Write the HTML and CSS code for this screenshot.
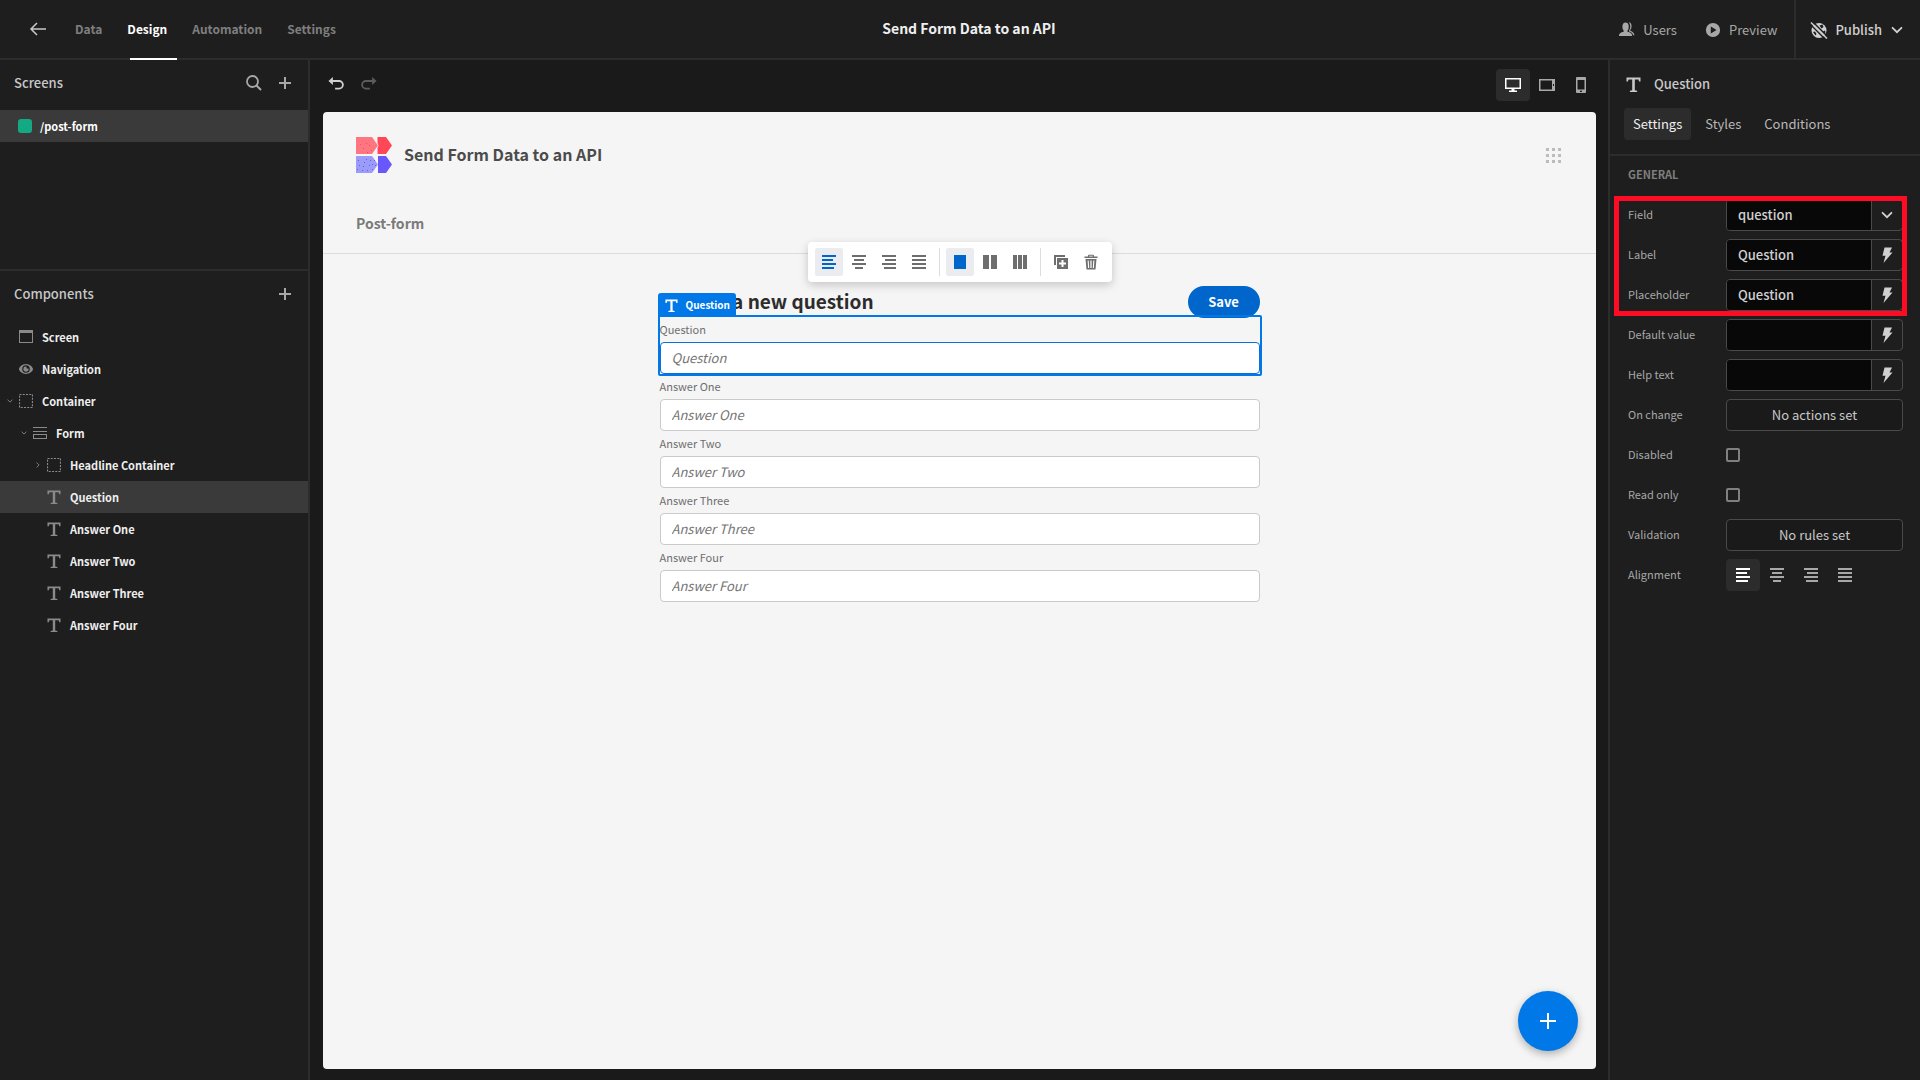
FILE: index.html
```html
<!DOCTYPE html>
<html lang="en">
<head>
<meta charset="utf-8">
<title>Send Form Data to an API</title>
<meta name="viewport" content="width=device-width, initial-scale=1">
<link rel="stylesheet" href="styles.css">
</head>
<body>
<svg class="sprite" aria-hidden="true">
  <symbol id="i-text" viewBox="1.5 1 15 15"><path d="M2 1.500h14v4h-1.400L14 3.500h-3.700v10.800l2.300.5v1.200H5.400v-1.200l2.300-.5V3.500H4L3.400 5.500H2z"/></symbol>
  <symbol id="i-plus" viewBox="0 0 18 18"><path d="M8 3h2v5h5v2h-5v5H8v-5H3V8h5z"/></symbol>
  <symbol id="i-left" viewBox="1 1 16 16"><path d="M2 2h14v2H2zM2 6h11v2H2zM2 10h14v2H2zM2 14h12v2H2z"/></symbol>
  <symbol id="i-center" viewBox="1 1 16 16"><path d="M2 2h14v2H2zM4 6h10v2H4zM2 10h14v2H2zM5 14h8v2H5z"/></symbol>
  <symbol id="i-right" viewBox="1 1 16 16"><path d="M2 2h14v2H2zM5 6h11v2H5zM2 10h14v2H2zM4 14h12v2H4z"/></symbol>
  <symbol id="i-justify" viewBox="1 1 16 16"><path d="M2 2h14v2H2zM2 6h14v2H2zM2 10h14v2H2zM2 14h14v2H2z"/></symbol>
  <symbol id="i-bolt" viewBox="1 1 16 16"><path d="M6.500 1.500h7.500l-2.500 5h3L5.500 17l2-7.200h-3z"/></symbol>
  <symbol id="i-box" viewBox="2 2 14 14"><path d="M2.500 2.500h13v13h-13z" fill="none" stroke="currentColor" stroke-width="1.200" stroke-dasharray="2 1.250"/></symbol>
  <symbol id="i-down" viewBox="0 0 18 18"><path d="M4 6.500l5 5 5-5" fill="none" stroke="currentColor" stroke-width="2" stroke-linecap="round"/></symbol>
</svg>

<header class="topbar">
  <nav class="main-nav">
    <a href="#" class="back" aria-label="Back"><svg class="icon" viewBox="0 0 18 18"><path d="M17 9H2M8 3L2 9l6 6" fill="none" stroke="currentColor" stroke-width="1.500"/></svg></a>
    <a href="#">Data</a>
    <a href="#" class="current">Design</a>
    <a href="#">Automation</a>
    <a href="#">Settings</a>
  </nav>
  <h1 class="app-name">Send Form Data to an API</h1>
  <div class="top-actions">
    <button type="button" class="top-btn"><svg class="icon" viewBox="1 1 17 17"><path d="M1 16c0-3 2.500-4 4.700-4.600.5-.2.500-1 .2-1.400C4.700 8.600 4.500 7 4.700 5 5 2.700 6.300 1.500 8 1.500s3.100 1.200 3.300 3.500c.2 2 0 3.600-1.200 5-.3.400-.3 1.200.2 1.400 2.200.6 4.700 1.600 4.700 4.600z"/><path d="M11 1.200c2 0 3.200 1.300 3.300 3.500.1 2-.2 3.400-1.200 4.600-.3.500-.2 1 .3 1.300 2 .8 3.700 1.800 4 4.400h-1.300c-.6-2.200-2.400-3.300-4.200-3.900-.4-.3-.3-1 0-1.500 1-1.600 1.200-3 1-5C12.700 3 12.100 2 11 1.200z"/></svg>Users</button>
    <button type="button" class="top-btn"><svg class="icon" viewBox="0 0 18 18"><path fill-rule="evenodd" d="M9 1a8 8 0 100 16A8 8 0 009 1zM6.500 5l6.500 4-6.500 4z"/></svg>Preview</button>
    <button type="button" class="top-btn publish"><svg class="icon" viewBox="0 0 18 18"><circle cx="9" cy="9.500" r="7.500"/><path d="M9.500 4.500l3-1 1 2.500-2 1.500zM3 11l2-.5 1.500 2.500-1 1.500zM13 10.500l2-1 .5 2-1.500 1.500z" fill="#1e1e1e"/><path d="M3 1L18 16" stroke="#1e1e1e" stroke-width="1.500"/><path d="M.5 3.500l14 14" stroke="#1e1e1e" stroke-width="1.500"/><path d="M1 1.500l16 16" stroke="currentColor" stroke-width="1.500"/></svg>Publish<svg class="icon chev"><use href="#i-down"/></svg></button>
  </div>
</header>

<div class="builder">
  <aside class="sidebar">
    <section class="screens">
      <div class="side-head"><h2>Screens</h2>
        <button type="button" class="icon-btn" aria-label="Search"><svg class="icon" viewBox="0 0 18 18"><circle cx="7.500" cy="7.500" r="5.500" fill="none" stroke="currentColor" stroke-width="1.800"/><path d="M11.500 11.500l4.500 4.500" stroke="currentColor" stroke-width="2"/></svg></button>
        <button type="button" class="icon-btn" aria-label="Add screen"><svg class="icon"><use href="#i-plus"/></svg></button>
      </div>
      <a href="#" class="screen-row"><span class="swatch"></span>/post-form</a>
    </section>
    <section class="components">
      <div class="side-head"><h2>Components</h2>
        <button type="button" class="icon-btn" aria-label="Add component"><svg class="icon"><use href="#i-plus"/></svg></button>
      </div>
      <ul class="tree">
        <li><a href="#" class="node"><span class="twist"></span><svg class="icon" viewBox="0 0 14 14"><path fill-rule="evenodd" d="M0 0h14v13H0zM1 3v9h12V3z"/></svg>Screen</a></li>
        <li><a href="#" class="node"><span class="twist"></span><svg class="icon" viewBox="0 0 14 14"><path fill-rule="evenodd" d="M7 2C3.500 2 0 5 0 7s3.500 5 7 5 7-3 7-5-3.500-5-7-5zM7 3.200a3.800 3.800 0 110 7.600 3.800 3.800 0 010-7.600z"/><path d="M7.500 4.500v2h2a2.600 2.600 0 11-2-2z"/></svg>Navigation</a></li>
        <li><a href="#" class="node"><svg class="twist"><use href="#i-down"/></svg><svg class="icon"><use href="#i-box"/></svg>Container</a>
          <ul>
            <li><a href="#" class="node"><svg class="twist"><use href="#i-down"/></svg><svg class="icon" viewBox="0 0 14 14"><path fill-rule="evenodd" d="M0 1h14v1H0zM0 5h14v1H0zM0 8h14v5H0zM1 9v3h12V9z"/></svg>Form</a>
              <ul>
                <li><a href="#" class="node"><svg class="twist closed"><use href="#i-down"/></svg><svg class="icon"><use href="#i-box"/></svg>Headline Container</a></li>
                <li><a href="#" class="node selected"><span class="twist"></span><svg class="icon"><use href="#i-text"/></svg>Question</a></li>
                <li><a href="#" class="node"><span class="twist"></span><svg class="icon"><use href="#i-text"/></svg>Answer One</a></li>
                <li><a href="#" class="node"><span class="twist"></span><svg class="icon"><use href="#i-text"/></svg>Answer Two</a></li>
                <li><a href="#" class="node"><span class="twist"></span><svg class="icon"><use href="#i-text"/></svg>Answer Three</a></li>
                <li><a href="#" class="node"><span class="twist"></span><svg class="icon"><use href="#i-text"/></svg>Answer Four</a></li>
              </ul>
            </li>
          </ul>
        </li>
      </ul>
    </section>
  </aside>

  <main class="workspace">
    <div class="workbar">
      <button type="button" class="hist" aria-label="Undo"><svg class="icon" viewBox="0 1 18 18"><path d="M4 5.500h8.500a4.200 4.200 0 010 8.500H8" fill="none" stroke="currentColor" stroke-width="2"/><path d="M.5 5.500L5.500 1v9z"/></svg></button>
      <button type="button" class="hist" aria-label="Redo" disabled><svg class="icon" viewBox="0 1 18 18"><path d="M14 5.500H5.500a4.200 4.200 0 000 8.500H10" fill="none" stroke="currentColor" stroke-width="2"/><path d="M17.500 5.500L12.500 1v9z"/></svg></button>
      <div class="devices">
        <button type="button" class="seg active" aria-label="Desktop"><svg class="icon" viewBox="1 1 16 16"><path fill-rule="evenodd" d="M1 2h16v11h-6.500v1.500H13V16H5v-1.500h2.500V13H1zM2.500 3.500v8h13v-8z"/></svg></button>
        <button type="button" class="seg" aria-label="Tablet"><svg class="icon" viewBox="1 1 16 16"><path fill-rule="evenodd" d="M1 3h16v12H1zM2.500 4.500v9H14v-9zM15 8v2h1V8z"/></svg></button>
        <button type="button" class="seg" aria-label="Mobile"><svg class="icon" viewBox="1 1 16 16"><path fill-rule="evenodd" d="M5 1h8a1 1 0 011 1v14a1 1 0 01-1 1H5a1 1 0 01-1-1V2a1 1 0 011-1zM5.500 4v9.500h7V4zM8 14.800v1.200h2v-1.200z"/></svg></button>
      </div>
    </div>

    <div class="preview">
      <div class="app-head">
        <div class="brand">
          <svg class="logo" viewBox="0 0 36 36"><path fill="#ff7680" d="M0 0h16l6 8.500-6 8.500H0z"/><path fill="#ff4757" d="M21.500 0H30l6 8.500-6 8.500h-8.500V11l1-2.500-1-2.500z"/><path fill="#9b9bf9" d="M0 19h16l6 8.500-6 8.500H0z"/><path fill="#6a57fb" d="M22 19h8l6 8.500-6 8.500h-8z"/><g fill="#ff4757"><path d="M4 7h1v1H4zM10 6h1v1h-1zM13 8h1v1h-1zM7 11h1v1H7zM15 13h1v1h-1zM11 15h1v1h-1z"/></g><g fill="#6a57fb"><path d="M2 23h1v1H2zM10 22h1v1h-1zM14 23h1v1h-1zM18 23h1v1h-1zM8 25h1v1H8zM3 28h1v1H3zM7 29h1v1H7zM13 28h1v1h-1zM16 27h1v1h-1zM19 28h1v1h-1zM1 32h1v1H1zM6 33h1v1H6zM11 33h1v1h-1zM16 32h1v1h-1z"/></g></svg>
          <h2>Send Form Data to an API</h2>
          <button type="button" class="grip" aria-label="Apps"><svg viewBox="0 0 15 15"><path d="M0 0h3v3H0zM6 0h3v3H6zM12 0h3v3h-3zM0 6h3v3H0zM6 6h3v3H6zM12 6h3v3h-3zM0 12h3v3H0zM6 12h3v3H6zM12 12h3v3h-3z"/></svg></button>
        </div>
        <a href="#" class="app-link">Post-form</a>
      </div>
      <div class="toolbar" role="toolbar" aria-label="Layout">
        <button type="button" class="tool active" aria-label="Align left"><svg class="icon"><use href="#i-left"/></svg></button>
        <button type="button" class="tool" aria-label="Align center"><svg class="icon"><use href="#i-center"/></svg></button>
        <button type="button" class="tool" aria-label="Align right"><svg class="icon"><use href="#i-right"/></svg></button>
        <button type="button" class="tool" aria-label="Justify"><svg class="icon"><use href="#i-justify"/></svg></button>
        <span class="rule"></span>
        <button type="button" class="tool active" aria-label="One column"><svg class="icon" viewBox="0 0 16 16"><path d="M2 1h12v14H2z"/></svg></button>
        <button type="button" class="tool" aria-label="Two columns"><svg class="icon" viewBox="0 0 16 16"><path d="M1 1h6v14H1zM9 1h6v14H9z"/></svg></button>
        <button type="button" class="tool" aria-label="Three columns"><svg class="icon" viewBox="0 0 16 16"><path d="M1 1h4v14H1zM6 1h4v14H6zM11 1h4v14h-4z"/></svg></button>
        <span class="rule"></span>
        <button type="button" class="tool" aria-label="Duplicate"><svg class="icon" viewBox="1 1 16 16"><path d="M2 2h11v2H4v8H2z"/><path fill-rule="evenodd" d="M5 5h11v11H5zM9.500 7v2.500H7v2h2.500V14h2v-2.500H14v-2h-2.500V7z"/></svg></button>
        <button type="button" class="tool" aria-label="Delete"><svg class="icon" viewBox="1 1 16 16"><path fill-rule="evenodd" d="M6 3.500V2.700a1 1 0 011-1h4a1 1 0 011 1v.8h3.500V5h-13V3.500zM7.200 3.500h3.600v-.8H7.200zM3.500 6h11l-1 10.500h-9zM5.600 7.500l.5 7.500h1.100l-.5-7.500zM8.400 7.500V15h1.200V7.500zM11.300 7.500l-.5 7.500h1.100l.5-7.500z"/></svg></button>
      </div>

      <form class="entry">
        <div class="headline"><h3>Submit a new question</h3><button type="button" class="save">Save</button></div>
        <div class="field chosen">
          <span class="tag"><svg class="icon"><use href="#i-text"/></svg>Question</span>
          <label for="q">Question</label><input id="q" type="text" placeholder="Question">
        </div>
        <div class="field"><label for="a1">Answer One</label><input id="a1" type="text" placeholder="Answer One"></div>
        <div class="field"><label for="a2">Answer Two</label><input id="a2" type="text" placeholder="Answer Two"></div>
        <div class="field"><label for="a3">Answer Three</label><input id="a3" type="text" placeholder="Answer Three"></div>
        <div class="field"><label for="a4">Answer Four</label><input id="a4" type="text" placeholder="Answer Four"></div>
      </form>
      <button type="button" class="fab" aria-label="Add"><svg viewBox="0 0 16 16"><path d="M7 0h2v7h7v2H9v7H7V9H0V7h7z"/></svg></button>
    </div>
  </main>

  <aside class="inspector">
    <div class="insp-head">
      <div class="insp-title"><svg class="icon"><use href="#i-text"/></svg><h2>Question</h2></div>
      <div class="tabs">
        <button type="button" class="tab active">Settings</button>
        <button type="button" class="tab">Styles</button>
        <button type="button" class="tab">Conditions</button>
      </div>
    </div>
    <div class="props">
      <h3>General</h3>
      <div class="group marked">
        <div class="prop"><label for="p-field">Field</label><div class="combo"><select id="p-field"><option>question</option></select><span class="addon"><svg class="icon"><use href="#i-down"/></svg></span></div></div>
        <div class="prop"><label for="p-label">Label</label><div class="combo"><input id="p-label" type="text" value="Question"><button type="button" class="addon" aria-label="Bind label"><svg class="icon"><use href="#i-bolt"/></svg></button></div></div>
        <div class="prop"><label for="p-ph">Placeholder</label><div class="combo"><input id="p-ph" type="text" value="Question"><button type="button" class="addon" aria-label="Bind placeholder"><svg class="icon"><use href="#i-bolt"/></svg></button></div></div>
      </div>
      <div class="group">
        <div class="prop"><label for="p-def">Default value</label><div class="combo"><input id="p-def" type="text"><button type="button" class="addon" aria-label="Bind default value"><svg class="icon"><use href="#i-bolt"/></svg></button></div></div>
        <div class="prop"><label for="p-help">Help text</label><div class="combo"><input id="p-help" type="text"><button type="button" class="addon" aria-label="Bind help text"><svg class="icon"><use href="#i-bolt"/></svg></button></div></div>
        <div class="prop"><label for="p-chg">On change</label><button type="button" id="p-chg" class="wide">No actions set</button></div>
        <div class="prop"><label for="p-dis">Disabled</label><input id="p-dis" type="checkbox"></div>
        <div class="prop"><label for="p-ro">Read only</label><input id="p-ro" type="checkbox"></div>
        <div class="prop"><label for="p-val">Validation</label><button type="button" id="p-val" class="wide">No rules set</button></div>
        <div class="prop"><span id="p-al" class="name">Alignment</span><div class="segs" role="group" aria-labelledby="p-al">
          <button type="button" class="seg active" aria-label="Left"><svg class="icon"><use href="#i-left"/></svg></button>
          <button type="button" class="seg" aria-label="Center"><svg class="icon"><use href="#i-center"/></svg></button>
          <button type="button" class="seg" aria-label="Right"><svg class="icon"><use href="#i-right"/></svg></button>
          <button type="button" class="seg" aria-label="Justify"><svg class="icon"><use href="#i-justify"/></svg></button>
        </div></div>
      </div>
    </div>
  </aside>
</div>
</body>
</html>
```
FILE: styles.css
```css
* { box-sizing: border-box; }
body {
  margin: 0;
  min-height: 100vh;
  display: flex;
  flex-direction: column;
  background: #1e1e1e;
  color: #c8c8c8;
  font: 13px/20px "Noto Sans CJK SC", "Noto Sans", sans-serif;
}
h1, h2, h3, ul { margin: 0; padding: 0; font-size: inherit; font-weight: inherit; }
ul { list-style: none; }
a { color: inherit; text-decoration: none; }
button, input, select { font: inherit; color: inherit; margin: 0; padding: 0; border: 0; background: none; border-radius: 0; }
button { display: inline-flex; align-items: center; justify-content: center; }
svg { display: block; fill: currentColor; flex: none; }
.sprite { position: absolute; width: 0; height: 0; }
.icon { width: 16px; height: 16px; }

/* Top bar */
.topbar {
  display: grid;
  grid-template-columns: 1fr auto 1fr;
  align-items: stretch;
  height: 60px;
  padding-left: 18px;
  border-bottom: 2px solid #2c2c2c;
}
.main-nav { display: flex; gap: 25px; padding-left: 11px; }
.main-nav a { position: relative; display: flex; align-items: center; height: 60px; padding-bottom: 2px; color: #7f7f7f; font-size: 12px; font-weight: 700; }
.main-nav .back { color: #c8c8c8; margin-right: 3px; }
.main-nav .back .icon { width: 18px; height: 18px; }
.main-nav .current { color: #fff; }
.main-nav .current::after { content: ""; position: absolute; left: 3px; bottom: 0; width: 47px; height: 2px; background: #fff; }
.app-name { padding-top: 18px; color: #efefef; font-size: 14px; font-weight: 700; }
.top-actions { display: flex; justify-content: flex-end; }
.top-btn { gap: 8px; color: #a8a8a8; margin-right: 28px; }
.top-btn:nth-child(2) { margin-right: 17px; }
.top-btn.publish { gap: 7px; margin: 0; padding: 0 15px 0 14px; color: #d0d0d0; font-weight: 500; border-left: 2px solid #2c2c2c; }
.publish .icon { width: 18px; height: 18px; }
.publish .chev { width: 16px; height: 16px; }

.builder { flex: 1; display: grid; grid-template-columns: 310px minmax(0, 1fr) 312px; }

/* Left side */
.sidebar { border-right: 2px solid #2c2c2c; }
.screens { height: 211px; border-bottom: 2px solid #2c2c2c; }
.side-head { display: flex; align-items: center; gap: 15px; height: 50px; padding: 0 15px 4px 14px; }
.side-head h2 { flex: 1; font-weight: 500; font-size: 13px; }
.icon-btn { color: #a8a8a8; width: 16px; height: 16px; }
.icon-btn .icon { width: 18px; height: 18px; }
.screen-row { display: flex; align-items: center; gap: 8px; height: 32px; padding-left: 18px; background: #3a3a3a; color: #fff; font-size: 11px; font-weight: 700; }
.swatch { width: 14px; height: 14px; border-radius: 3px; background: #12a983; }
.node { display: flex; align-items: center; height: 32px; padding-left: 6px; color: #efefef; font-size: 11px; font-weight: 700; }
.node .icon { width: 14px; height: 14px; margin-right: 9px; color: #8a8a8a; }
.twist { width: 8px; height: 8px; margin-right: 5px; color: #8a8a8a; }
.twist.closed { transform: rotate(-90deg); }
.tree ul .node { padding-left: 20px; }
.tree ul ul .node { padding-left: 34px; }
.node.selected { background: #3a3a3a; }

/* Workspace */
.workspace { display: flex; flex-direction: column; background: #1a1a1a; padding: 0 12px 11px 13px; }
.workbar { display: flex; align-items: center; height: 52px; padding-bottom: 2px; }
.hist { width: 25px; height: 32px; color: #d0d0d0; margin-right: 8px; }
.hist:disabled { color: #5c5c5c; }
.devices { display: flex; margin: 0 -2px 0 auto; }
.seg { width: 34px; height: 32px; border-radius: 4px; color: #a8a8a8; }
.seg.active { background: #2c2c2c; color: #fff; }

.preview {
  position: relative;
  flex: 1;
  background: #f5f5f5;
  border-radius: 4px;
  color: #2c2c2c;
}
.app-head { height: 142px; padding: 25px 35px 0 33px; border-bottom: 1px solid #dcdcdc; }
.brand { display: flex; align-items: center; gap: 12px; height: 36px; margin-bottom: 40px; }
.logo { width: 36px; height: 36px; }
.brand h2 { flex: 1; padding-bottom: 2px; font-size: 16px; font-weight: 700; color: #4b4b4b; }
.grip { color: #bcbcbc; }
.grip svg { width: 15px; height: 15px; }
.app-link { color: #7a7a7a; font-size: 14px; font-weight: 700; }

.toolbar {
  position: absolute;
  top: 130px;
  left: 50%;
  transform: translateX(-50%);
  z-index: 2;
  display: flex;
  gap: 2px;
  padding: 6px 7px;
  background: #fff;
  border-radius: 4px;
  box-shadow: 0 3px 10px rgba(0, 0, 0, .2);
}
.tool { width: 28px; height: 28px; border-radius: 2px; color: #6e6e6e; }
.tool.active { background: #eaecef; color: #0066cc; }
.rule { width: 1px; margin: 0 4px; background: #dcdcdc; }

.entry { width: 600px; max-width: 100%; margin: 32px auto 0; }
.headline { display: flex; align-items: flex-start; justify-content: space-between; height: 31px; }
.headline h3 { font-size: 19px; line-height: 30px; font-weight: 700; }
.save { width: 72px; height: 32px; border-radius: 16px; background: #0066cc; color: #fff; font-weight: 700; }
.field { position: relative; }
.field label { display: block; height: 25px; line-height: 24px; font-size: 11px; color: #6e6e6e; }
.field input { display: block; width: 100%; height: 32px; padding: 0 11px 2px; border: 1px solid #cacaca; border-radius: 4px; background: #fff; }
.field input::placeholder { color: #757575; font-style: italic; opacity: 1; }
.chosen input { border-color: #0f6fd0; }
.chosen::before { content: ""; position: absolute; inset: -2px; border: 2px solid #0078e7; border-radius: 0 2px 2px 2px; pointer-events: none; }
.tag {
  position: absolute;
  left: -2px;
  bottom: 100%;
  display: flex;
  align-items: center;
  gap: 8px;
  height: 24px;
  padding: 0 6px 0 7px;
  border-radius: 3px 3px 0 0;
  background: #0078e7;
  color: #fff;
  font-size: 10px;
  font-weight: 700;
}
.tag .icon { width: 13px; height: 13px; }
.fab { position: absolute; right: 18px; bottom: 18px; width: 60px; height: 60px; border-radius: 50%; background: #0078e7; color: #fff; box-shadow: 0 3px 8px rgba(0, 0, 0, .3); }
.fab svg { width: 16px; height: 16px; }

/* Right side */
.inspector { border-left: 2px solid #2c2c2c; }
.insp-head { padding: 14px 14px; height: 96px; border-bottom: 2px solid #2c2c2c; }
.insp-title { display: flex; align-items: center; gap: 13px; height: 20px; margin-bottom: 14px; padding-left: 2px; font-weight: 500; }
.insp-title .icon { width: 15px; height: 15px; }
.tabs { display: flex; gap: 5px; }
.tab { height: 32px; padding: 0 9px; border-radius: 4px; color: #b8b8b8; }
.tab.active { background: #2c2c2c; color: #efefef; }
.props { padding: 8px 17px 8px 18px; }
.props h3 { margin-bottom: 11px; font-size: 11px; font-weight: 700; text-transform: uppercase; color: #7f7f7f; }
.group { position: relative; }
.marked::after { content: ""; position: absolute; inset: 1px -4px -1px -14px; border: 5px solid #ff0c24; pointer-events: none; }
.prop { display: grid; grid-template-columns: 98px minmax(0, 1fr); align-items: center; height: 40px; color: #a8a8a8; font-size: 11px; }
.prop label, .prop .name { padding-bottom: 2px; }
.combo { display: flex; height: 32px; border: 1px solid #4a4a4a; border-radius: 4px; overflow: hidden; }
.combo input, .combo select { flex: 1; min-width: 0; padding: 0 11px; appearance: none; background: #080808; color: #d0d0d0; font-size: 13px; font-weight: 500; }
.addon { display: flex; width: 31px; align-items: center; justify-content: center; border-left: 1px solid #4a4a4a; color: #d0d0d0; }
.wide { height: 32px; border: 1px solid #4a4a4a; border-radius: 4px; color: #c8c8c8; font-size: 13px; background: #1a1a1a; }
.prop input[type="checkbox"] { appearance: none; width: 14px; height: 14px; border: 2px solid #808080; border-radius: 2px; }
.segs { display: flex; }
```
